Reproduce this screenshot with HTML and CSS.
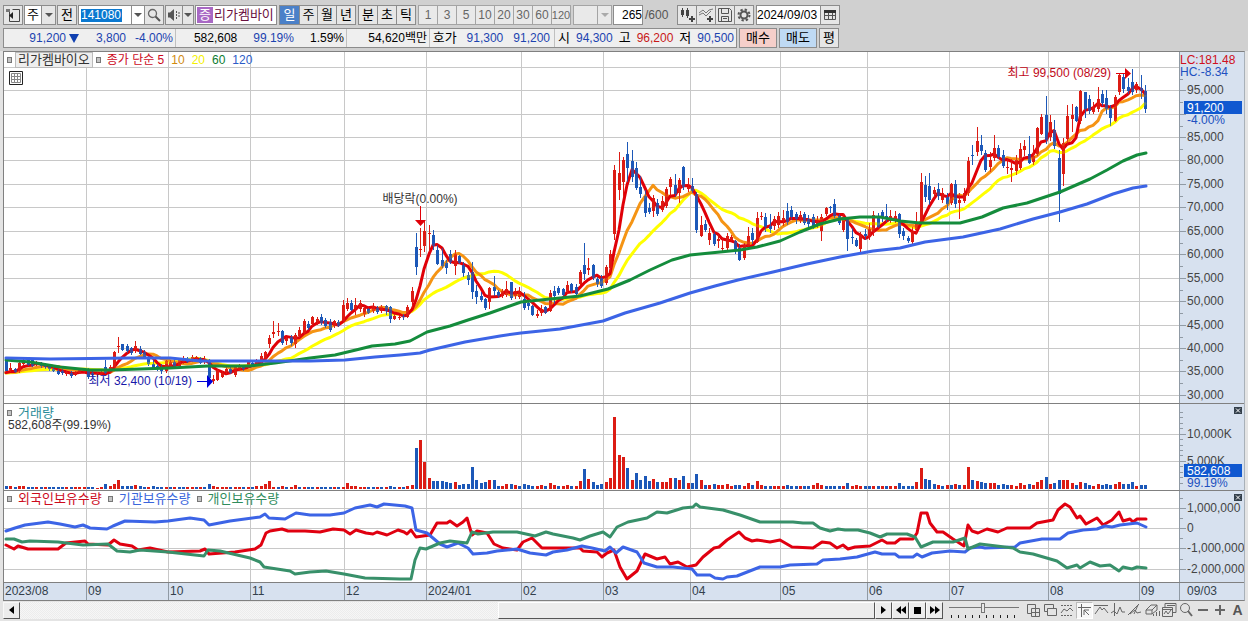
FILE: index.html
```html
<!DOCTYPE html>
<html lang="ko">
<head>
<meta charset="utf-8">
<title>리가켐바이오 차트</title>
<link rel="stylesheet" href="styles.css">
</head>
<body>
<header class="toolbar">
  <button class="btn w20" aria-label="패널 열기"><svg width="16" height="16" viewBox="0 0 16 16"><path d="M1 2.5h4M4.500 5v9.500h10v-12h-7" fill="none" stroke="#444"/><path d="M8 5v7l-4-3.500z" fill="#222"/><path d="M1 2h4v3H1z" fill="#777"/></svg></button>
  <div class="group">
    <button class="btn white w18">주</button><button class="btn w15 arrow" aria-label="주기 목록"></button>
  </div>
  <button class="btn w20">전</button>
  <div class="group code">
    <label class="field"><input class="code-input" value="141080" aria-label="종목코드"></label><button class="btn plain w14 arrow" aria-label="최근 종목"></button><button class="btn w20" aria-label="검색"><svg width="14" height="14" viewBox="0 0 14 14"><circle cx="5.500" cy="5.500" r="4" fill="none" stroke="#666" stroke-width="1.300"/><path d="M8.500 8.500l4.500 4.500" stroke="#555" stroke-width="2"/></svg></button>
  </div>
  <div class="group">
    <button class="btn w18" aria-label="소리"><svg width="14" height="14" viewBox="0 0 14 14"><path d="M1 4.500h2l4-3.500v12l-4-3.500H1z" fill="#555"/><path d="M9.500 3v8M12 4v6" stroke="#555" stroke-dasharray="2 1"/></svg></button><button class="btn w12 arrow" aria-label="소리 설정"></button>
  </div>
  <div class="stock"><span class="badge">증</span><span class="stock-name">리가켐바이</span></div>
  <div class="group gap2">
    <button class="btn w21 active">일</button><button class="btn w19">주</button><button class="btn w20">월</button><button class="btn w20">년</button>
  </div>
  <div class="group gap2">
    <button class="btn w20">분</button><button class="btn w20">초</button><button class="btn w20">틱</button>
  </div>
  <div class="group gap2">
    <button class="btn dim w20">1</button><button class="btn dim w20">3</button><button class="btn dim w20">5</button><button class="btn dim w20">10</button><button class="btn dim w20">20</button><button class="btn dim w20">30</button><button class="btn dim w20">60</button><button class="btn dim w20 tight">120</button>
  </div>
  <div class="group gap2"><button class="btn dim w25" aria-label="사용자 주기"></button><button class="btn dim w15 arrow" aria-label="사용자 주기 목록"></button></div>
  <label class="count"><input class="count-input" value="265" aria-label="표시 개수"><span>/600</span></label>
  <div class="group">
    <button class="btn w20" aria-label="차트 종류"><svg width="16" height="16" viewBox="0 0 16 16"><path d="M3.500 1v9M8.500 1v10" stroke="#444"/><path d="M2 3h3v5H2zM7 3h3v6H7zM10 11h6v2h-6zM12 9h2v6h-2z" fill="#444"/></svg></button><button class="btn w20" aria-label="지표 추가"><svg width="16" height="16" viewBox="0 0 16 16"><path d="M1 6l4-3 3 3 3-3 4-1M1 8l4-2 3 3 5-5" fill="none" stroke="#777"/><path d="M9 11h6v2H9zM11 9h2v6h-2z" fill="#444"/></svg></button><button class="btn w20" aria-label="저장"><svg width="14" height="14" viewBox="0 0 14 14"><path d="M.500.500h11l2 2v11H.500zM3.500.500v5h7v-5M3.500 13.500v-5h7v5M5 10.500h4" fill="none" stroke="#555"/></svg></button><button class="btn w20" aria-label="설정"><svg width="14" height="14" viewBox="0 0 14 14"><circle cx="7" cy="7" r="3.500" fill="none" stroke="#555" stroke-width="2"/><circle cx="7" cy="7" r="5.500" fill="none" stroke="#555" stroke-width="2" stroke-dasharray="2.300 2.020"/></svg></button>
  </div>
  <div class="group date"><label class="field"><input class="date-input" value="2024/09/03" aria-label="기준일"></label><button class="btn w20" aria-label="달력"><svg width="12" height="10" viewBox="0 0 12 10"><path d="M.500.500h11v9H.500zM.500 5.500h11M4.500 2v7M8.500 2v7" fill="none" stroke="#555"/><path d="M0 0h12v3H0z" fill="#333"/></svg></button></div>
</header>

<section class="quote">
  <div class="quote-box">
    <div class="cell first dn"><span>91,200</span><i class="fall"></i><span>3,800</span><span>-4.00%</span></div>
    <div class="cell second"><span>582,608</span><span class="dn">99.19%</span><span>1.59%</span></div>
    <div class="cell third"><span>54,620백만</span></div>
    <div class="cell fourth"><span class="ko">호가</span><span class="dn">91,300</span><span class="dn">91,200</span></div>
    <div class="cell fifth"><span class="ko">시</span><span class="dn">94,300</span><span class="ko">고</span><span class="up">96,200</span><span class="ko">저</span><span class="dn">90,500</span></div>
  </div>
  <button class="btn buy">매수</button><button class="btn sell">매도</button><button class="btn w20">평</button>
</section>

<main class="chart">
  <div class="pane price">
    <div class="legend">
      <i class="mark"></i><span class="boxed">리가켐바이오</span><i class="mark"></i>
      <span class="ma"><span class="ma5">종가 단순 5</span><span class="ma10">10</span><span class="ma20">20</span><span class="ma60">60</span><span class="ma120">120</span></span>
    </div>
    <button class="table-btn" aria-label="데이터 표"><svg width="14" height="14" viewBox="0 0 14 14"><path d="M.500.500h13v13H.500z" fill="#fff" stroke="#222"/><path d="M2.500 2.500h9v9h-9zM2.500 5.500h9M2.500 8.500h9M5.500 2.500v9M8.500 2.500v9" fill="none" stroke="#888"/></svg></button>
    <svg class="plot" id="price"></svg>
    <svg class="axis" id="price-axis"></svg>
  </div>
  <div class="pane volume">
    <div class="legend stack"><span class="line"><i class="mark"></i><span class="vol-name">거래량</span></span><span class="vol-now">582,608주(99.19%)</span></div>
    <svg class="plot" id="volume"></svg>
    <svg class="axis" id="volume-axis"></svg>
    <button class="close" aria-label="닫기"><svg width="8" height="7" viewBox="0 0 8 7"><path d="M2 1.500l4 4M6 1.500l-4 4"/></svg></button>
  </div>
  <div class="pane holding">
    <div class="legend"><i class="mark"></i><span class="foreign">외국인보유수량</span><i class="mark"></i><span class="inst">기관보유수량</span><i class="mark"></i><span class="indiv">개인보유수량</span></div>
    <svg class="plot" id="holding"></svg>
    <svg class="axis" id="holding-axis"></svg>
    <button class="close" aria-label="닫기"><svg width="8" height="7" viewBox="0 0 8 7"><path d="M2 1.500l4 4M6 1.500l-4 4"/></svg></button>
  </div>
  <div class="dates">
    <div class="months"><span>2023/08</span><span>09</span><span>10</span><span>11</span><span>12</span><span>2024/01</span><span>02</span><span>03</span><span>04</span><span>05</span><span>06</span><span>07</span><span>08</span><span>09</span></div>
    <span class="today">09/03</span>
  </div>
</main>

<footer class="bottom">
  <div class="scroll">
    <button class="raised" aria-label="왼쪽"><svg width="5" height="8" viewBox="0 0 5 8"><path d="M5 0v8L0 4z"/></svg></button>
    <div class="track"><div class="thumb"></div></div>
    <button class="raised" aria-label="오른쪽"><svg width="5" height="8" viewBox="0 0 5 8"><path d="M0 0v8l5-4z"/></svg></button>
    <button class="raised" aria-label="빠르게 뒤로"><svg width="10" height="8" viewBox="0 0 10 8"><path d="M5 0v8L0 4zM10 0v8L5 4z"/></svg></button>
    <button class="raised" aria-label="정지"><svg width="7" height="7" viewBox="0 0 7 7"><path d="M0 0h7v7H0z"/></svg></button>
    <button class="raised" aria-label="빠르게 앞으로"><svg width="10" height="8" viewBox="0 0 10 8"><path d="M0 0v8l5-4zM5 0v8l5-4z"/></svg></button>
  </div>
  <div class="zoom"><input type="range" min="0" max="100" value="48" aria-label="확대 비율"><i class="ticks"></i></div>
  <div class="tools">
    <button aria-label="창 추가"><svg viewBox="0 0 16 16"><path d="M6 11.500H2.500v-9h8V6M6.500 6.500h8v8h-8zM10.500 7v7M7 10.500h7"/></svg></button>
    <button aria-label="창 겹치기"><svg viewBox="0 0 16 16"><path d="M5 9.500H2.500v-7h9V6M5.500 6.500h9v7h-9z"/></svg></button>
    <button aria-label="비교"><svg viewBox="0 0 16 16"><path d="M2 3.500h12M2 13.500h12" stroke-dasharray="2 1"/><path d="M2 11l3-4 3 2 3-3 3 3"/></svg></button>
    <button class="on" aria-label="십자선"><svg viewBox="0 0 16 16"><path d="M1 4.500h13M4.500 1v13M7 7l5 5M7 12V7h5"/></svg></button>
    <button aria-label="수평선"><svg viewBox="0 0 16 16"><path d="M1 3.500h14M2 12l5-7 2 3 2-2 4 5"/></svg></button>
    <button aria-label="수직선"><svg viewBox="0 0 16 16"><path d="M4.500 1v13M1 11l3-2 3 3 3-7 2 5h3"/></svg></button>
    <button aria-label="추세선"><svg viewBox="0 0 16 16"><path d="M1 13L12 2M3 12l5-4 2 3 4-1M7 12l4-9"/></svg></button>
    <button aria-label="도형"><svg viewBox="0 0 16 16"><path d="M2 8l5-5h6l-5 5zM2 8v4h6V8M8 12l5-4V3M9.500 14v-2M12.500 14v-4M15.500 14V9"/></svg></button>
    <button aria-label="이미지"><svg viewBox="0 0 16 16"><path d="M4 5V1.500h11v9h-3M1.500 5.500h10v9h-10zM3 12l2-3 2 3 3-4M2 7.500h9M6 3.500h8"/></svg></button>
    <button aria-label="돋보기"><svg viewBox="0 0 16 16"><circle cx="7" cy="6" r="4.500"/><path d="M10 9l4 5" stroke-width="2"/></svg></button>
    <button aria-label="축소"><svg viewBox="0 0 16 16"><path d="M3 8h10" stroke-width="2"/></svg></button>
    <button aria-label="확대"><svg viewBox="0 0 16 16"><path d="M3 8h10M8 3v10" stroke-width="2"/></svg></button>
    <button class="letter">A</button>
  </div>
</footer>
<script src="chart.js"></script>
</body>
</html>
```
FILE: styles.css
```css
* { box-sizing: border-box; }
body {
  margin: 0;
  min-height: 100vh;
  background: #e4e4e4;
  font: 12px/16px "Liberation Sans", "Noto Sans CJK KR", sans-serif;
  color: #000;
}
button, input { font: inherit; color: inherit; margin: 0; padding: 0; border-radius: 0; }
svg { display: block; }

.toolbar {
  display: flex;
  gap: 1px;
  height: 28px;
  padding: 5px 3px 3px;
  background: #d0d0d0;
  white-space: nowrap;
}
.group { display: flex; }
.gap2 { margin-left: 1px; }
.btn {
  display: flex;
  align-items: center;
  justify-content: center;
  flex: none;
  height: 20px;
  border: 1px solid #8c8c8c;
  background: #e6e6e6;
  font-size: 13px;
}
.group > * + .btn { margin-left: -1px; }
.btn.white, .btn.plain { background: #fff; }
.btn.dim { background: #e9e9e9; color: #666; border-color: #a4a4a4; font-size: 12px; }
.btn.dim.tight { font-size: 11px; }
.btn.active { background: #4a80c8; color: #fff; }
.w12 { width: 12px; }
.w14 { width: 14px; }
.w15 { width: 15px; }
.w18 { width: 18px; }
.w19 { width: 19px; }
.w20 { width: 20px; }
.w21 { width: 21px; }
.w25 { width: 25px; }
.arrow::after {
  content: "";
  border: 4px solid transparent;
  border-top-color: #555;
  border-bottom: 0;
}
.arrow.dim::after { border-top-color: #aaa; }
.field { display: flex; }
.field input { height: 20px; border: 1px solid #8c8c8c; background: #fff; }
.field .code-input {
  width: 54px;
  padding-left: 2px;
  color: #fff;
  background: linear-gradient(#0a78d0, #0a78d0) 2px 3px / 41px 13px no-repeat #fff;
}
.field .date-input { width: 65px; padding: 0; font-size: 12px; }
.date { margin-left: 1px; }
.stock {
  display: flex;
  width: 82px;
  height: 20px;
  padding: 1px;
  gap: 1px;
  border: 1px solid #8c8c8c;
  background: #fff;
  color: #6a1040;
}
.badge { flex: none; width: 16px; background: #a868c4; color: #fff; text-align: center; font-size: 13px; }
.stock-name { font-size: 13px; }
.count { display: flex; align-items: center; width: 63px; gap: 2px; color: #555; }
.count-input { width: 30px; height: 20px; border: 1px solid #8c8c8c; background: #fff; color: #000; text-align: right; }

.quote {
  display: flex;
  gap: 2px;
  height: 23px;
  padding: 0 3px 3px;
  background: #d0d0d0;
  white-space: nowrap;
}
.quote-box { display: flex; border: 1px solid #8c8c8c; background: #efefef; }
.quote .buy { width: 38px; background: #f6cfca; }
.quote .sell { width: 38px; background: #bfdaf4; }
.cell { display: flex; align-items: center; justify-content: flex-end; padding-right: 2px; border-right: 1px solid #c0c0c0; }
.cell:last-child { border-right: 0; }
.cell.first { width: 172px; }
.cell.second { width: 171px; gap: 16px; }
.cell.third { width: 83px; }
.cell.fourth { width: 125px; gap: 10px; padding-right: 4px; }
.cell.fifth { width: 181px; gap: 6px; }
.ko { font-size: 13px; }
.first span { text-align: right; width: 47px; }
.fall { border: 5px solid transparent; border-top: 9px solid #1040b0; border-bottom: 0; margin-left: 3px; }
.dn { color: #1c44b0; }
.up { color: #c81818; }

.chart {
  margin: 0 3px;
  border: 1px solid #808080;
  border-right-color: #a8b0b8;
  background: #fff;
}
.pane { position: relative; display: flex; border-bottom: 1px solid #808080; }
.price { height: 352px; }
.volume { height: 87px; }
.holding { height: 92px; }
.plot { flex: 1; min-width: 0; height: 100%; }
.axis { flex: none; width: 65px; height: 100%; background: #d7e1ef; border-left: 1px solid #909aa4; }
.plot text, .axis text { font-size: 12px; }
.axis text { fill: #444; }
.legend { position: absolute; left: 3px; top: 0; display: flex; align-items: center; gap: 6px; font-size: 13px; }
.price .legend { gap: 3px; }
.stack { flex-direction: column; align-items: flex-start; gap: 0; line-height: 13px; padding-top: 2px; }
.line { display: flex; align-items: center; gap: 6px; }
.vol-name { color: #2a8c98; }
.vol-now { color: #333; padding-left: 1px; font-size: 12px; }
.mark { width: 5px; height: 6px; border: 1px solid #777; background: #c4c4c4; }
.boxed { padding: 0 2px; border: 1px solid #bbb; background: #eee; color: #333; line-height: 14px; }
.ma { display: flex; gap: 7px; padding-left: 3px; font-size: 12px; }
.ma5, .foreign { color: #cc0a1c; }
.ma10 { color: #d08a10; }
.ma20 { color: #f4f000; }
.ma60 { color: #0c7c30; }
.ma120 { color: #2c5cc8; }
.inst { color: #3a66dc; }
.indiv { color: #2f8c5c; }
.table-btn { position: absolute; left: 5px; top: 19px; border: 0; background: none; }
.close {
  position: absolute;
  right: 2px;
  top: 3px;
  border: 0;
  background: #34404c;
}
.close svg { fill: none; stroke: #fff; }
.dates { display: flex; height: 17px; background: #d7e1ef; color: #333f4c; line-height: 16px; }
.months { flex: 1; display: grid; grid-template-columns: 82fr 82fr 82fr 94fr 82fr 95fr 82fr 87fr 90fr 87fr 82fr 99fr 91fr 40fr; }
.months span { padding-left: 1px; border-left: 1px solid #909aa4; }
.months span:first-child { border-left: 0; }
.today { width: 65px; padding-left: 7px; border-left: 1px solid #909aa4; }

.bottom { display: flex; align-items: center; gap: 6px; height: 18px; padding-left: 3px; }
.scroll { flex: 1; display: flex; height: 17px; }
.raised {
  display: flex;
  align-items: center;
  justify-content: center;
  flex: none;
  width: 17px;
  border: 1px solid #f8f8f8;
  border-right-color: #555;
  border-bottom-color: #555;
  background: #ececec;
}
.track { flex: 1; display: grid; grid-template-columns: 479fr 377fr; background: repeating-conic-gradient(#f6f6f6 0 25%, #ececec 0 50%) 0 0 / 2px 2px; }
.thumb { grid-column: 2; border: 1px solid #fff; border-right-color: #555; border-bottom-color: #555; background: #ececec; }
.zoom { width: 70px; }
.zoom input {
  display: block;
  width: 70px;
  height: 11px;
  appearance: none;
  background: linear-gradient(#777, #777) 0 5px / 100% 1px no-repeat;
}
.zoom input::-webkit-slider-thumb { appearance: none; width: 4px; height: 10px; border: 1px solid #777; background: #e8e8e8; }
.ticks { display: block; height: 3px; margin: 2px 2px 0; background: repeating-linear-gradient(90deg, #222 0 1px, transparent 1px 7px); }
.tools { display: flex; width: 223px; justify-content: space-between; padding-right: 2px; }
.tools button { width: 17px; height: 17px; border: 0; background: none; }
.tools .on { background: #f8f8f8; border: 1px solid #bbb; border-right-color: #fff; border-bottom-color: #fff; }
.tools svg { width: 16px; height: 16px; fill: none; stroke: #666; }
.tools .letter { font: bold 14px/17px "Liberation Sans", sans-serif; color: #555; }
```
FILE: chart.js
```js
// Daily bars: colour, then high / body top / body bottom / low levels.
const BARS = `b357 358 371 371;r363 368 370 372;b368 369 372 373;r362 363 371 373;r358 360 364 365;b358 360 365 366;b358 360 366 367;r361 363 365 366;b362 364 366 368;b363 365 367 369
b365 366 369 371;b367 369 371 372;b369 371 374 375;b369 371 373 375;r371 372 374 376;b371 373 376 378;r371 372 375 376;r369 370 373 374;r369 370 372 373;b368 371 377 379
b371 373 375 376;r372 373 375 377;r370 372 374 375;b360 367 373 374;r365 367 372 373;r351 352 367 368;r337 346 347 353;b344 344 350 351;b344 346 351 353;b347 348 353 355
r341 346 350 353;b346 349 354 355;b350 352 357 359;b356 357 364 366;b360 364 369 370;b364 366 369 371;b364 368 371 374;r360 361 371 373;r360 362 367 368;b360 362 366 368
r358 359 366 367;r356 358 362 364;b357 359 362 363;r355 357 361 362;r356 357 361 362;b357 358 363 364;r356 359 362 364;b359 360 378 380;r375 379 381 384;r369 370 380 381
r371 373 377 378;r367 369 372 374;b367 369 373 374;r366 367 375 377;r364 365 370 371;b365 366 369 371;r361 362 367 368;b361 363 366 367;r359 360 364 365;r353 356 362 363
r351 352 359 361;r335 338 344 348;r321 332 334 338;r323 331 332 336;b330 331 343 345;r337 338 341 345;b335 337 343 346;r333 335 344 348;r327 330 336 338;r319 321 333 334
b321 324 328 330;r316 317 324 326;r317 319 322 325;b314 317 323 325;b318 320 326 328;b319 322 330 332;r320 321 326 328;b320 322 326 327;r300 305 321 323;r298 303 309 311
b300 303 310 311;r298 305 309 315;r300 303 309 312;r306 308 314 317;b308 309 313 314;r303 306 311 313;b306 308 312 314;r305 307 311 313;b305 306 311 315;b306 307 319 323
r314 316 319 320;r315 317 318 320;b314 316 317 320;r305 307 317 318;r287 291 302 308;b233 247 267 275;r228 249 250 257;r220 231 246 252;r225 233 234 252;b230 235 246 250
b245 250 264 265;b248 260 266 268;b260 263 268 274;b250 254 262 264;r250 254 266 275;b255 256 263 264;b262 265 273 277;b272 275 280 285;b262 272 292 299;b285 291 297 304
b292 296 300 302;b298 299 308 310;r287 288 302 309;b276 287 291 296;b290 292 296 298;r289 291 296 298;r281 289 295 297;b282 282 298 300;r288 291 296 299;r287 291 297 299
b292 299 308 310;b300 303 306 310;b305 306 315 316;r310 314 316 318;r305 309 313 316;b306 307 313 314;r290 293 311 312;b286 291 296 304;b286 288 293 295;b288 289 295 296
r281 285 291 294;b283 284 291 293;b284 287 294 296;r270 272 284 285;b243 265 274 280;r258 268 270 275;b264 265 278 280;b277 279 284 287;b275 278 286 288;r265 267 283 285
r250 254 268 272;r165 170 234 240;r152 173 190 200;r157 160 182 197;b142 154 168 182;b150 161 177 182;b162 168 188 190;b176 187 194 198;b190 196 213 217;b203 208 212 214
r195 198 211 217;b199 203 214 216;r196 201 210 212;r187 189 206 208;r177 179 187 196;b174 185 194 197;r178 180 193 203;b166 167 187 190;r178 187 189 192;b178 186 191 193
b192 194 230 233;r216 225 236 237;b220 224 230 232;r228 233 240 245;b232 234 244 246;r234 239 241 248;r237 248 249 251;r233 236 248 252;r235 237 240 241;b240 241 251 254
b244 248 260 261;r243 245 258 260;r227 236 246 248;b228 233 240 244;r212 218 242 243;r212 216 217 220;b213 217 227 232;b214 226 229 233;r216 219 226 230;r212 216 225 228
r210 218 221 226;b203 211 222 225;b206 210 217 220;b212 214 219 224;r211 215 221 223;b212 214 223 225;b215 219 224 227;b214 217 226 229;r216 220 226 228;r214 217 231 241
r207 208 214 216;b206 207 208 213;b199 204 216 218;b214 216 223 225;r214 217 230 232;b217 219 239 251;b228 237 238 244;b238 240 246 247;r232 234 249 252;b229 234 236 240
r223 229 237 240;r211 215 232 236;b213 217 227 228;b210 212 218 222;b204 216 219 222;r210 216 219 223;r211 216 219 223;b213 214 234 238;b228 231 236 240;b236 238 241 243
r227 231 242 245;r212 224 230 234;r173 182 222 225;b176 185 197 202;b173 186 200 205;r187 190 194 197;b183 189 196 200;r188 193 200 203;b193 197 204 210;r183 184 203 205
b180 184 204 208;r193 200 203 219;r188 193 201 203;r157 161 193 196;b145 155 156 165;r127 141 152 156;b135 145 151 155;b150 153 170 172;r152 160 167 172;r135 148 158 161
b145 148 157 159;b150 155 166 168;r158 167 168 174;r159 168 170 182;r155 160 171 175;r143 149 168 170;r140 146 150 156;b136 154 163 164;r145 156 162 165;r127 128 154 156
r114 117 134 135;b96 115 140 144;r115 122 137 141;b120 130 146 149;b150 158 194 222;r138 143 174 186;r105 116 139 145;r104 115 119 132;b106 107 121 122;r90 91 121 124
b92 92 109 118;b95 99 111 114;r102 107 112 114;r87 99 109 112;b90 94 103 106;b90 98 109 114;b105 108 118 126;r95 97 121 122;r73 75 92 95;b74 77 89 93
b78 87 91 94;b69 82 92 95;r82 84 90 93;b75 88 91 99;b85 91 109 113`.split(/[;\n]/).map(s => [s[0], ...s.slice(1).split(' ').map(Number)]);

// Traded volume, bar heights by day.
const VOLUME = `b3 r3 b2 r3 r3 b2 b2 r2 b2 r2 b2 b2 b2 b2 r2 b2 r2 r2 r2 b2 b2 r1 r2 b5 r3 r5 r9 b3 b3 b3 r4 b3 b2 r2 b3 b2 b2 r2 b2 r2 b2 b2 r2 r2 b2 r2 b2 b5 r3 r2 r2 r2 b2 r2 r2 b2 r2 b2 r3 r3 r5 r8 r2 b2 r3 b2 r2 r4 b2 r2 b2 b2 r2 b2 b2 b2 r2 b2 r2 r6 r3 r3 r2 r2 b2 b2 r2 b2 r2 b3 b2 r2 b2 r3 r4
b41 r49 r27 r11 b8 b8 b8 b7 b6 r7 b4 b5 b5 b22 b9 b6 b7 r9 b9 b3 r3 r5 b5 r4 b3 b5 b4 b3 r3 r4 b3 r6 r4 b3 r3 r4 b3 r3 r8 b20 r10 b7 b4 b5 r7 r11 r72 r34 r32 b21 r9 b16 b9 b13 b8 r10 b7 r7 r7 r11 b11 r9 b13 r6 b6 b15 r9 b4 r4 b5 r4 r4 r5 r3 b4 b4 r3 r6 b4 r8 r4 b3 b3 r3 r3 r3 b4 b3 b3 r3 b3 b3 r4 r6 r4 b3
b3 b3 b3 r3 b6 r3 r4 r3 b3 b3 r3 b3 r3 b3 r3 r3 b6 b3 b3 b3 r7 r21 b10 b9 b5 r4 b3 r4 b4 r5 b4 r4 r22 b9 r8 b7 b6 r6 r6 b4 b5 b4 r4 r3 r6 r4 b5 r4 r7 r9 b12 r5 b6 b9 r9 r9 r6 b4 r7 b6 b4 r3 r5 b4 b5 b4 r5 r7 b5 b5 b7 r3 b4 b4`.split(/\s+/).map(s => [s[0], +s.slice(1)]);

const MA60 = '6,360 30,362 60,367 90,370 110,370 140,369 170,368 208,366 250,366 275,363 310,358 335,355 360,349 372,346 395,344 410,341 427,332 450,326 468,320 490,313 521,302 550,299 580,296 608,289 630,280 650,270 672,260 690,255 720,252 740,250 757,247 780,241 800,232 820,224 840,219 860,217 880,217 900,221 920,223 960,223 982,217 1003,208 1027,203 1060,192 1090,179 1107,170 1123,161 1137,155 1146,153';
const MA120 = '6,358 50,359 130,358 170,358 200,361 260,361 310,361 345,360 375,357 400,355 420,353 430,350 465,342 500,336 521,333 560,329 603,321 625,313 660,303 690,293 715,286 738,280 773,272 807,264 840,257 873,251 900,248 925,242 963,237 1000,229 1033,219 1060,212 1087,204 1113,194 1133,188 1146,186';
const FOREIGN = '6,545 14,549 18,546 28,549 58,549 66,543 85,541 88,544 108,545 114,540 120,544 132,546 138,550 150,548 168,552 200,551 205,549 209,554 235,552 255,549 261,545 266,533 270,531 282,529 288,531 305,531 320,532 333,529 344,530 350,534 356,530 366,533 373,534 377,532 387,535 398,530 404,532 407,534 411,530 416,537 430,535 437,523 447,523 450,521 457,526 463,522 467,518 472,535 477,531 487,533 494,544 503,548 517,550 523,542 532,538 542,548 580,548 583,551 597,552 602,557 607,553 614,550 620,567 627,579 637,571 645,554 657,559 665,557 670,564 678,562 687,567 696,565 703,557 714,548 719,547 727,540 739,532 745,538 752,541 757,540 770,542 780,540 792,547 813,548 822,542 830,543 837,548 843,545 848,549 855,547 870,546 882,540 887,543 895,543 900,539 913,539 917,533 921,513 927,513 930,523 937,532 943,532 953,539 964,546 968,525 972,531 978,533 987,529 998,532 1007,528 1030,528 1037,523 1053,520 1058,510 1065,504 1070,507 1077,518 1080,516 1086,524 1097,518 1103,525 1112,520 1119,512 1123,521 1130,519 1133,522 1137,519 1146,519';
const INST = '6,531 15,528 25,525 48,522 60,524 75,527 83,525 90,528 107,529 113,526 125,521 155,522 168,521 190,518 204,520 209,525 230,521 260,517 265,514 269,518 285,519 296,513 310,515 330,515 344,513 355,508 370,505 377,507 384,504 405,506 412,508 416,530 427,533 440,544 447,547 458,543 468,548 473,554 487,553 497,551 517,549 530,553 546,555 553,552 567,550 582,546 592,548 605,551 610,547 616,553 623,547 637,552 644,563 657,567 673,567 692,569 697,575 710,575 715,578 723,579 727,577 737,576 760,567 780,567 790,565 817,564 823,560 840,559 857,557 875,552 882,554 895,554 899,557 913,557 917,554 922,557 932,553 950,551 965,552 970,548 980,547 985,548 1015,547 1020,543 1042,539 1060,539 1068,533 1083,530 1097,529 1105,526 1112,527 1120,525 1137,523 1146,527';
const INDIV = '6,539 14,539 22,542 30,541 58,542 83,545 108,544 117,551 130,552 140,550 168,552 204,556 208,550 220,551 250,558 260,562 264,567 290,571 295,574 310,572 326,571 344,574 365,578 400,579 411,579 415,560 420,548 426,549 433,546 440,543 450,541 467,543 472,532 478,534 493,532 517,532 535,536 546,532 553,534 573,538 580,540 590,536 603,532 610,537 617,527 628,522 647,518 657,512 667,513 683,508 693,507 696,504 700,507 723,510 740,515 760,522 793,522 803,523 813,523 820,528 830,531 838,529 845,530 858,530 870,533 880,537 887,534 907,534 915,537 921,547 933,542 953,542 965,538 968,549 980,544 1013,548 1020,552 1033,554 1057,561 1067,568 1077,565 1080,568 1090,562 1100,566 1110,565 1119,571 1123,567 1132,569 1137,567 1146,568';

const MONTHS = [86, 168, 250, 344, 426, 521, 603, 690, 780, 867, 949, 1048, 1139];
const LEFT = 4, SPAN = 1175, RED = '#dc1c14', BLUE = '#1c58b8';
const dayX = i => 6 + i * 1139 / 264;

function plot(id, top, height, rows, body) {
  const el = document.getElementById(id);
  const width = el.clientWidth;
  const X = v => Math.round((v - LEFT) * width / SPAN);
  const grid = MONTHS.map(m => `<rect x="${X(m)}" y="${top}" width="1" height="${height}"/>`).join('')
    + rows.map(y => `<rect x="0" y="${y}" width="${width}" height="1"/>`).join('');
  el.setAttribute('viewBox', `0 ${top} ${width} ${height}`);
  el.innerHTML = `<g fill="#c8c8c8" shape-rendering="crispEdges">${grid}</g>${body(X)}`;
}
const line = (X, points, color, w) => {
  const p = points.map(([x, y]) => `${X(x)},${y}`).join(' ');
  return `<polyline points="${p}" fill="none" stroke="${color}" stroke-width="${w}" stroke-linejoin="round" stroke-linecap="round"/>`;
};
const parse = s => s.split(' ').map(p => p.split(',').map(Number));

function average(n) {
  const closes = BARS.map(b => b[0] === 'r' ? b[2] : b[3]);
  return closes.map((_, i) => {
    let sum = 0;
    for (let k = i - n + 1; k <= i; k++) sum += k < 0 ? 373 : closes[k];
    return [dayX(i), sum / n];
  });
}

const priceRows = Array.from({ length: 15 }, (_, k) => Math.round(66.6 + k * 23.45));

function draw() {
  plot('price', 52, 351, priceRows, X => {
    const bars = BARS.map(([c, hi, a, b, lo], i) => {
      const x = X(dayX(i)), col = c === 'r' ? RED : BLUE;
      return `<path d="M${x} ${hi}h1v${lo - hi}h-1zM${x - 1} ${a}h3v${Math.max(b - a, 1)}h-3z" fill="${col}"/>`;
    }).join('');
    const low = X(213), high = X(1131), ex = X(420);
    return `<g shape-rendering="crispEdges">${bars}</g>`
      + line(X, average(20), '#ffff00', 3) + line(X, average(10), '#f59414', 3) + line(X, average(5), '#e00008', 3)
      + `<g shape-rendering="crispEdges" opacity=".75">${bars}</g>`
      + line(X, parse(MA60), '#148c3c', 3) + line(X, parse(MA120), '#3c64e6', 3)
      + `<g fill="#0000d8"><text x="${low - 21}" y="385" text-anchor="end" fill="#1818a8">최저 32,400 (10/19)</text><path d="M${low - 16} 381h10v-6l6 6.500-6 6.500v-6h-10z"/></g>`
      + `<g fill="#e00008"><text x="${high - 20}" y="77" text-anchor="end" fill="#c00818">최고 99,500 (08/29)</text><path d="M${high - 15} 73h9v-5l6 5.500-6 5.500v-5h-9z"/></g>`
      + `<text x="${ex}" y="203" text-anchor="middle" fill="#333">배당락(0.00%)</text><path d="M${ex} 206h1v14h5l-5.500 6-5.500-6h5z" fill="#e00008"/>`;
  });
  plot('volume', 404, 86, [434, 461], X => '<g shape-rendering="crispEdges">' + VOLUME.map(([c, h], i) =>
    `<rect x="${X(dayX(i)) - 1}" y="${489 - h}" width="3" height="${h}" fill="${c === 'r' ? RED : BLUE}"/>`).join('') + '</g>');
  plot('holding', 491, 91, [508, 528, 548, 569], X =>
    line(X, parse(FOREIGN), '#e00010', 3) + line(X, parse(INST), '#3c64e6', 3) + line(X, parse(INDIV), '#38906a', 3));
}

function axis(id, top, height, labels, minor, extra) {
  const el = document.getElementById(id);
  el.setAttribute('viewBox', `0 ${top} 64 ${height}`);
  el.innerHTML = '<g fill="#909aa4" shape-rendering="crispEdges">'
    + labels.map(([y]) => `<rect x="0" y="${y}" width="6" height="1"/>`).join('')
    + minor.map(y => `<rect x="0" y="${y}" width="3" height="1"/>`).join('') + '</g>'
    + labels.map(([y, t]) => t ? `<text x="7" y="${y + 4}">${t}</text>` : '').join('') + extra;
}
const tag = (y, t) => `<path d="M4 ${y - 6}h58v13H4z" fill="#1058d0"/><text x="7" y="${y + 5}" style="fill:#fff">${t}</text>`;
const note = (x, y, t, c) => `<text x="${x}" y="${y}" style="fill:${c}">${t}</text>`;

axis('price-axis', 52, 351,
  priceRows.slice(1).map((y, k) => [y, k === 1 ? '' : (95 - 5 * k) + ',000']),
  priceRows.slice(0, 14).map(y => y + 12),
  note(0, 64, 'LC:181.48', '#d01020') + note(0, 76, 'HC:-8.34', '#2050c0') + tag(107, '91,200') + note(7, 124, '-4.00%', '#2050c0'));
axis('volume-axis', 404, 86, [[434, '10,000K'], [461, '5,000K']],
  [412, 417, 423, 428, 439, 445, 450, 455, 466, 472, 477, 483], tag(470, '582,608') + note(7, 487, '99.19%', '#2050c0'));
axis('holding-axis', 491, 91, [[508, '1,000,000'], [528, '0'], [548, '-1,000,000'], [569, '-2,000,000']],
  [498, 518, 538, 559], '');

draw();
addEventListener('resize', draw);
```
